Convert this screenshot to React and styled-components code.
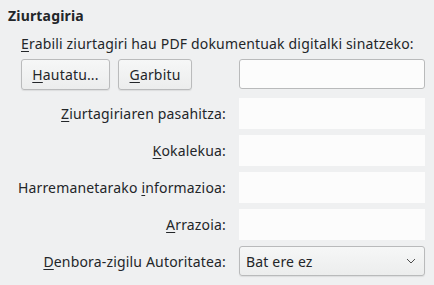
import React from 'react';
import styled, { createGlobalStyle } from 'styled-components';

const Global = createGlobalStyle`
  html, body {
    margin: 0;
    padding: 0;
    background: #eff0f1;
  }
  body {
    font-family: "Noto Sans", "Open Sans", sans-serif;
    font-size: 14px;
    letter-spacing: 0.17px;
    color: #232629;
  }
`;

const rows = [
  { mnemonic: 'Z', rest: 'iurtagiriaren pasahitza:' },
  { mnemonic: 'K', rest: 'okalekua:' },
  { before: 'Harremanetarako ', mnemonic: 'i', rest: 'nformazioa:' },
  { mnemonic: 'A', rest: 'rrazoia:' },
];

const App = () => {
  return (
    <Page>
      <Global />
      <Title>Ziurtagiria</Title>
      <Body>
        <Intro><U>E</U>rabili ziurtagiri hau PDF dokumentuak digitalki sinatzeko:</Intro>
        <Grid>
          <Buttons>
            <Button $width={89}><span><U>H</U>autatu...</span></Button>
            <Button $width={74}><span><U>G</U>arbitu</span></Button>
          </Buttons>
          <Field $bordered />
          {rows.map((r, i) => (
            <React.Fragment key={i}>
              <Label><span>{r.before}<U>{r.mnemonic}</U>{r.rest}</span></Label>
              <Field />
            </React.Fragment>
          ))}
          <Label><span><U>D</U>enbora-zigilu Autoritatea:</span></Label>
          <Combo>
            <span>Bat ere ez</span>
            <svg width="10" height="6" viewBox="0 0 10 6">
              <path d="M1 1 L5 5 L9 1" fill="none" stroke="#4d4d4d" strokeWidth="1" />
            </svg>
          </Combo>
        </Grid>
      </Body>
    </Page>
  );
};

// Styled components
const Page = styled.div`
  padding: 6px 8px 8px 8px;
  width: 434px;
  box-sizing: border-box;
`;

const Title = styled.div`
  font-weight: bold;
  line-height: 20px;
`;

const Body = styled.div`
  margin-left: 13px;
  margin-top: 8px;
`;

const Intro = styled.div`
  line-height: 19px;
`;

const U = styled.span`
  text-decoration: underline;
  text-underline-offset: 2px;
`;

const Grid = styled.div`
  display: grid;
  grid-template-columns: minmax(0, 1fr) 186px;
  column-gap: 13px;
  row-gap: 6px;
  margin-top: 6px;
  margin-right: 1px;
  & > :first-child,
  & > :nth-child(2) {
    margin-bottom: 2px;
  }
`;

const Buttons = styled.div`
  display: flex;
  gap: 8px;
`;

const Button = styled.div`
  width: ${(p) => p.$width}px;
  height: 31px;
  box-sizing: border-box;
  display: flex;
  align-items: center;
  justify-content: center;
  border: 1px solid #babbbc;
  border-radius: 3px;
  background: linear-gradient(#f6f7f7, #eceded);
  box-shadow: 0 1px 1px rgba(0, 0, 0, 0.08);
`;

const Label = styled.div`
  display: flex;
  align-items: center;
  justify-content: flex-end;
  height: 31px;
  white-space: pre;
`;

const Field = styled.div`
  height: ${(p) => (p.$bordered ? '30px' : '31px')};
  box-sizing: border-box;
  background: #fcfcfc;
  border: ${(p) => (p.$bordered ? '1px solid #b9babb' : 'none')};
  border-radius: ${(p) => (p.$bordered ? '3px' : '0')};
`;

const Combo = styled.div`
  height: 30px;
  box-sizing: border-box;
  display: flex;
  align-items: center;
  justify-content: space-between;
  padding: 0 8px 0 6px;
  border: 1px solid #b9babb;
  border-radius: 3px;
  background: linear-gradient(#f6f7f7, #eceded);
  box-shadow: 0 1px 1px rgba(0, 0, 0, 0.08);
`;

export default App;
